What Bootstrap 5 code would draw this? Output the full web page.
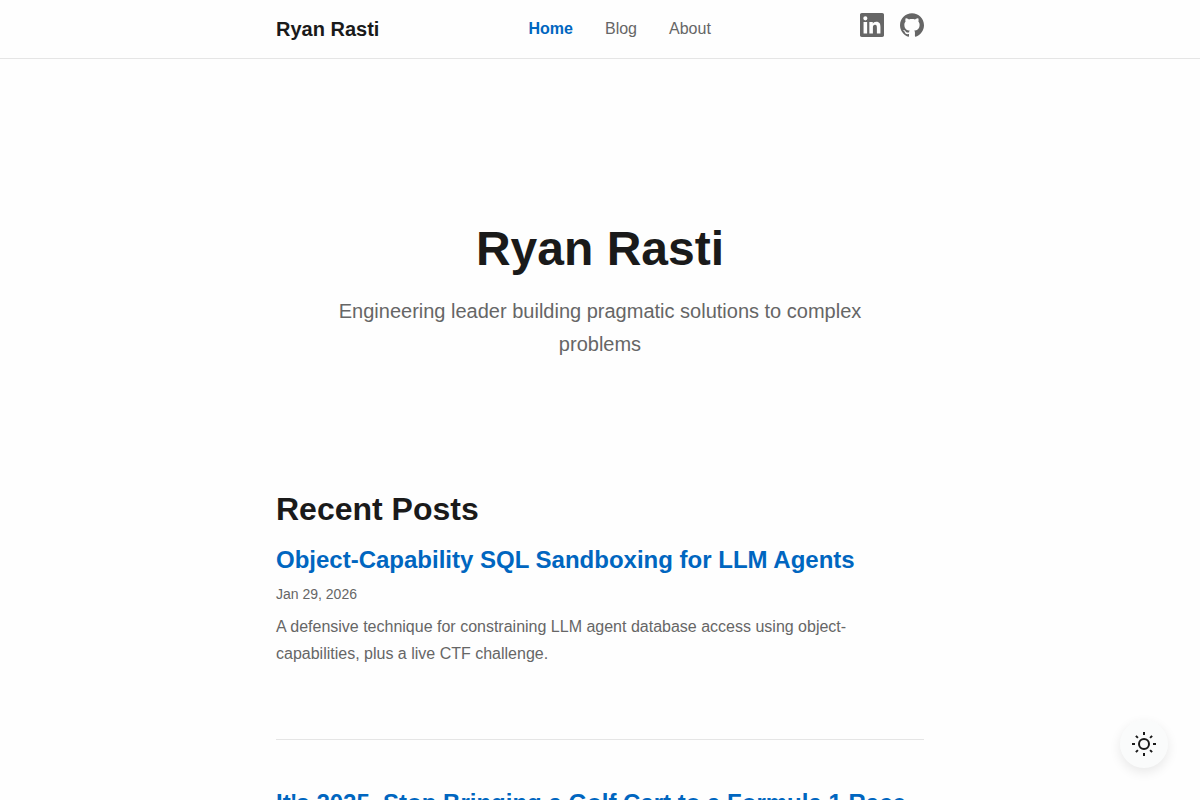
<!DOCTYPE html>
<html lang="en">
<head>
<meta charset="utf-8">
<meta name="viewport" content="width=device-width, initial-scale=1">
<title>Ryan Rasti</title>
<link href="https://cdn.jsdelivr.net/npm/bootstrap@5.3.0/dist/css/bootstrap.min.css" rel="stylesheet">
<style>
  body { font-family: "Liberation Sans", Arial, sans-serif; color: #1a1a1a; background: #fefefe; line-height: 27px; }
  a { text-decoration: none; }
  .page-column { max-width: 696px; padding-left: 24px; padding-right: 24px; }
  .site-header { border-bottom: 1px solid #e5e5e5; }
  .site-brand { font-size: 20px; line-height: 34px; color: #1a1a1a; }
  .site-links { gap: 32px; line-height: 26px; }
  .site-links a, .social-links a { color: #666; }
  .site-links a.active { color: #0066c0; font-weight: 600; }
  .social-links { padding-bottom: 8px; }
  .social-links svg { display: block; }
  .intro { padding: 160px 0 128px; }
  .intro h1 { font-size: 48px; line-height: 60px; font-weight: 700; margin-bottom: 16px; }
  .intro p { font-size: 20px; line-height: 33px; color: #666; max-width: 600px; }
  .section-title { font-size: 32px; line-height: 40px; font-weight: 700; margin-bottom: 15px; }
  .post { padding-bottom: 72px; margin-bottom: 47px; border-bottom: 1px solid #e5e5e5; }
  .post h3 { font-size: 24px; line-height: 31px; font-weight: 600; margin-bottom: 7px; }
  .post h3 a { color: #0066c0; }
  .post time { font-size: 14px; line-height: 24px; color: #666; margin-bottom: 7px; }
  .post p { color: #666; }
  .theme-toggle { width: 48px; height: 48px; right: 32px; bottom: 32px; background: #fafbfb; color: #1a1a1a; box-shadow: 0 4px 12px rgba(0, 0, 0, .09); }
</style>
</head>
<body>
<header class="site-header">
  <div class="container-fluid page-column d-flex justify-content-between align-items-center">
    <a class="site-brand fw-bold py-2 my-1" href="#">Ryan Rasti</a>
    <nav class="site-links d-flex" aria-label="Main">
      <a class="active" href="#" aria-current="page">Home</a>
      <a href="#">Blog</a>
      <a href="#">About</a>
    </nav>
    <div class="social-links d-flex gap-3">
      <a href="#" aria-label="LinkedIn"><svg width="24" height="24" viewBox="0 0 24 24" fill="currentColor" aria-hidden="true"><path d="M20.447 20.452h-3.554v-5.569c0-1.328-.027-3.037-1.852-3.037-1.853 0-2.136 1.445-2.136 2.939v5.667H9.351V9h3.414v1.561h.046c.477-.9 1.637-1.85 3.37-1.85 3.601 0 4.267 2.37 4.267 5.455v6.286zM5.337 7.433a2.062 2.062 0 0 1-2.063-2.065 2.064 2.064 0 1 1 2.063 2.065zm1.782 13.019H3.555V9h3.564v11.452zM22.225 0H1.771C.792 0 0 .774 0 1.729v20.542C0 23.227.792 24 1.771 24h20.451C23.2 24 24 23.227 24 22.271V1.729C24 .774 23.2 0 22.222 0h.003z"/></svg></a>
      <a href="#" aria-label="GitHub"><svg width="24" height="24" viewBox="0 0 24 24" fill="currentColor" aria-hidden="true"><path d="M12 .297c-6.63 0-12 5.373-12 12 0 5.303 3.438 9.8 8.205 11.385.6.113.82-.258.82-.577 0-.285-.01-1.04-.015-2.04-3.338.724-4.042-1.61-4.042-1.61C4.422 18.07 3.633 17.7 3.633 17.7c-1.087-.744.084-.729.084-.729 1.205.084 1.838 1.236 1.838 1.236 1.07 1.835 2.809 1.305 3.495.998.108-.776.417-1.305.76-1.605-2.665-.3-5.466-1.332-5.466-5.93 0-1.31.465-2.38 1.235-3.22-.135-.303-.54-1.523.105-3.176 0 0 1.005-.322 3.3 1.23.96-.267 1.98-.399 3-.405 1.02.006 2.04.138 3 .405 2.28-1.552 3.285-1.23 3.285-1.23.645 1.653.24 2.873.12 3.176.765.84 1.23 1.91 1.23 3.22 0 4.61-2.805 5.625-5.475 5.92.42.36.81 1.096.81 2.22 0 1.606-.015 2.896-.015 3.286 0 .315.21.69.825.57C20.565 22.092 24 17.592 24 12.297c0-6.627-5.373-12-12-12"/></svg></a>
    </div>
  </div>
</header>
<main class="container-fluid page-column">
  <section class="intro text-center">
    <h1>Ryan Rasti</h1>
    <p class="mx-auto mb-0">Engineering leader building pragmatic solutions to complex problems</p>
  </section>
  <section>
    <h2 class="section-title">Recent Posts</h2>
    <article class="post">
      <h3><a href="#">Object-Capability SQL Sandboxing for LLM Agents</a></h3>
      <time class="d-block" datetime="2026-01-29">Jan 29, 2026</time>
      <p class="mb-0">A defensive technique for constraining LLM agent database access using object-capabilities, plus a live CTF challenge.</p>
    </article>
    <article class="post">
      <h3><a href="#">It's 2025, Stop Bringing a Golf Cart to a Formula 1 Race</a></h3>
    </article>
  </section>
</main>
<button type="button" class="theme-toggle position-fixed rounded-circle border-0 p-0 d-flex align-items-center justify-content-center" aria-label="Toggle theme">
  <svg width="24" height="24" viewBox="0 0 24 24" fill="none" stroke="currentColor" stroke-width="2" aria-hidden="true"><circle cx="12" cy="12" r="5"/><path d="M12 0v3M12 21v3M3.9 3.9l2 2M18.1 18.1l2 2M0 12h3M21 12h3M3.9 20.1l2-2M18.1 5.9l2-2"/></svg>
</button>
<script src="https://cdn.jsdelivr.net/npm/bootstrap@5.3.0/dist/js/bootstrap.bundle.min.js"></script>
</body>
</html>
